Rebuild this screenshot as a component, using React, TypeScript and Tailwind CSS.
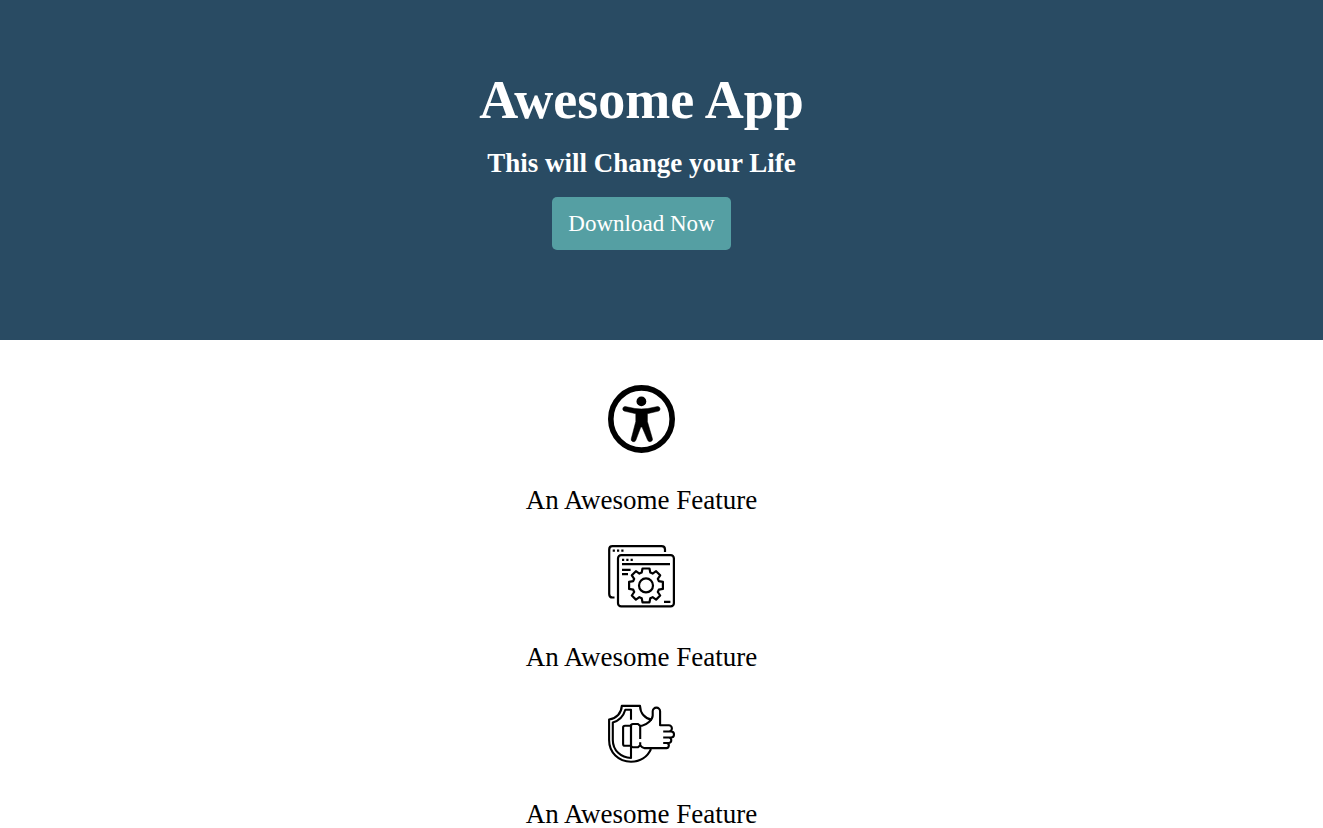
import type { ReactNode } from "react";

function AccessibilityIcon() {
  return (
    <svg viewBox="0 0 67 68" className="h-[68px] w-[67px]" aria-hidden="true">
      <ellipse cx="33.5" cy="34" rx="30.7" ry="31.1" fill="none" stroke="black" strokeWidth="5.6" />
      <circle cx="33.4" cy="16.4" r="4.9" />
      <path
        d="M17.2 21.5 L27 23.5 Q33.4 24.3 39.8 23.5 L49.6 21.5 A2.4 2.4 0 0 1 50.6 26.1 L39.4 28.7 V36.5 L44.3 53.3 A2.4 2.4 0 0 1 39.6 55.1 L34 42 H32.8 L27.9 55.1 A2.4 2.4 0 0 1 23.3 53.6 L27.8 36.5 V28.7 L16.2 26.1 A2.4 2.4 0 0 1 17.2 21.5 Z"
        stroke="black"
        strokeWidth="0.5"
      />
    </svg>
  );
}

function SettingsWindowIcon() {
  return (
    <svg
      viewBox="0 -1 67 68"
      className="h-[68px] w-[67px]"
      fill="none"
      stroke="black"
      strokeWidth="2.2"
      aria-hidden="true"
    >
      <path d="M6.5 54.5 H4.5 Q1.2 54.5 1.2 51 V6.5 Q1.2 3.2 4.5 3.2 H53.5 Q57 3.2 57 6.5 V9" />
      <rect x="10" y="12.2" width="55.9" height="51.2" rx="3.2" />
      <path d="M4.7 7.7 h2.2 M9 7.7 h2.2 M13.3 7.7 h2.2 M14 16.8 h2.2 M18.3 16.8 h2.2 M22.6 16.8 h2.2" />
      <path d="M14 21.2 H62 M14 26.9 H22.6 M14 31.2 H20 M56 58.8 H62.4" />
      <circle cx="38" cy="42.4" r="7" />
      <g strokeLinejoin="round">
        <path d="M34.5 25.5 H41.5 L42.3 29.6 L44.6 30.6 L48.1 28.2 L52.2 32.3 L49.8 35.8 L50.8 38.1 L54.9 38.9 V45.9 L50.8 46.7 L49.8 49 L52.2 52.5 L48.1 56.6 L44.6 54.2 L42.3 55.2 L41.5 59.3 H34.5 L33.7 55.2 L31.4 54.2 L27.9 56.6 L23.8 52.5 L26.2 49 L25.2 46.7 L21.1 45.9 V38.9 L25.2 38.1 L26.2 35.8 L23.8 32.3 L27.9 28.2 L31.4 30.6 L33.7 29.6 Z" />
      </g>
    </svg>
  );
}

function ShieldThumbIcon() {
  return (
    <svg
      viewBox="0 -1.5 67 68"
      className="h-[68px] w-[67px]"
      fill="none"
      stroke="black"
      strokeWidth="2.1"
      strokeLinejoin="round"
      aria-hidden="true"
    >
      <path d="M44 19.2 C37 18 32.3 13 32 5.4 H13.8 C13.5 12.5 8.5 18 1.1 19 V39.5 C1.1 52 10.5 61.2 23 61.2 C32 61.2 39.5 56.5 43 48.5" />
      <path d="M23 19.3 V9.3 H17.3 C15.5 15.5 11 20.3 4.8 22 V39.5 C4.8 50 13 57.3 23 57.5 V24" />
      <path d="M23 25.2 H17 Q15.1 25.2 15.1 27 V43.4 Q15.1 45.3 17 45.3 H23" />
      <path d="M32.2 38.5 V25.5 L30 23.5 H25 Q23 23.5 23 25.5 V44.8 Q23 46.8 25 46.8 H30 L32.2 44.8 V41.8" />
      <path d="M32.2 25.2 H34 C39 24.5 44.7 19 44.7 15 V10.8 A3.7 3.7 0 0 1 52.1 10.8 V24.8 H60.8 A3.1 3.1 0 0 1 60.8 31 H55.2 M60.8 31 H63 A3 3 0 0 1 63 37 H55.2 M61 37 A2.8 2.8 0 0 1 61 42.5 H55.2 M58.8 42.5 A2.6 2.6 0 0 1 57.8 47.6 H36.5 Q34.5 47.6 32.2 44.8" />
    </svg>
  );
}

function Feature({ icon, children }: { icon: ReactNode; children: ReactNode }) {
  return (
    <li className="flex flex-col items-center gap-[34px]">
      {icon}
      <p className="text-[27px] leading-[27px]">{children}</p>
    </li>
  );
}

export default function App() {
  return (
    <div className="min-h-screen bg-white font-['Liberation_Serif',serif] text-black">
      <header className="flex flex-col items-center bg-[#294b63] pt-[69px] pr-10 pb-[90px] text-white">
        <h1 className="text-[54px] leading-[62px] font-bold">Awesome App</h1>
        <h3 className="mt-[17px] text-[27px] leading-[31px] font-bold">This will Change your Life</h3>
        <button
          type="button"
          className="mt-[18px] cursor-pointer rounded-[5px] bg-[#559fa3] px-4 py-[13px] text-[23px] leading-[27px]"
        >
          Download Now
        </button>
      </header>
      <main>
        <ul className="flex flex-col gap-7 pt-[45px] pr-10">
          <Feature icon={<AccessibilityIcon />}>An Awesome Feature</Feature>
          <Feature icon={<SettingsWindowIcon />}>An Awesome Feature</Feature>
          <Feature icon={<ShieldThumbIcon />}>An Awesome Feature</Feature>
        </ul>
      </main>
    </div>
  );
}
